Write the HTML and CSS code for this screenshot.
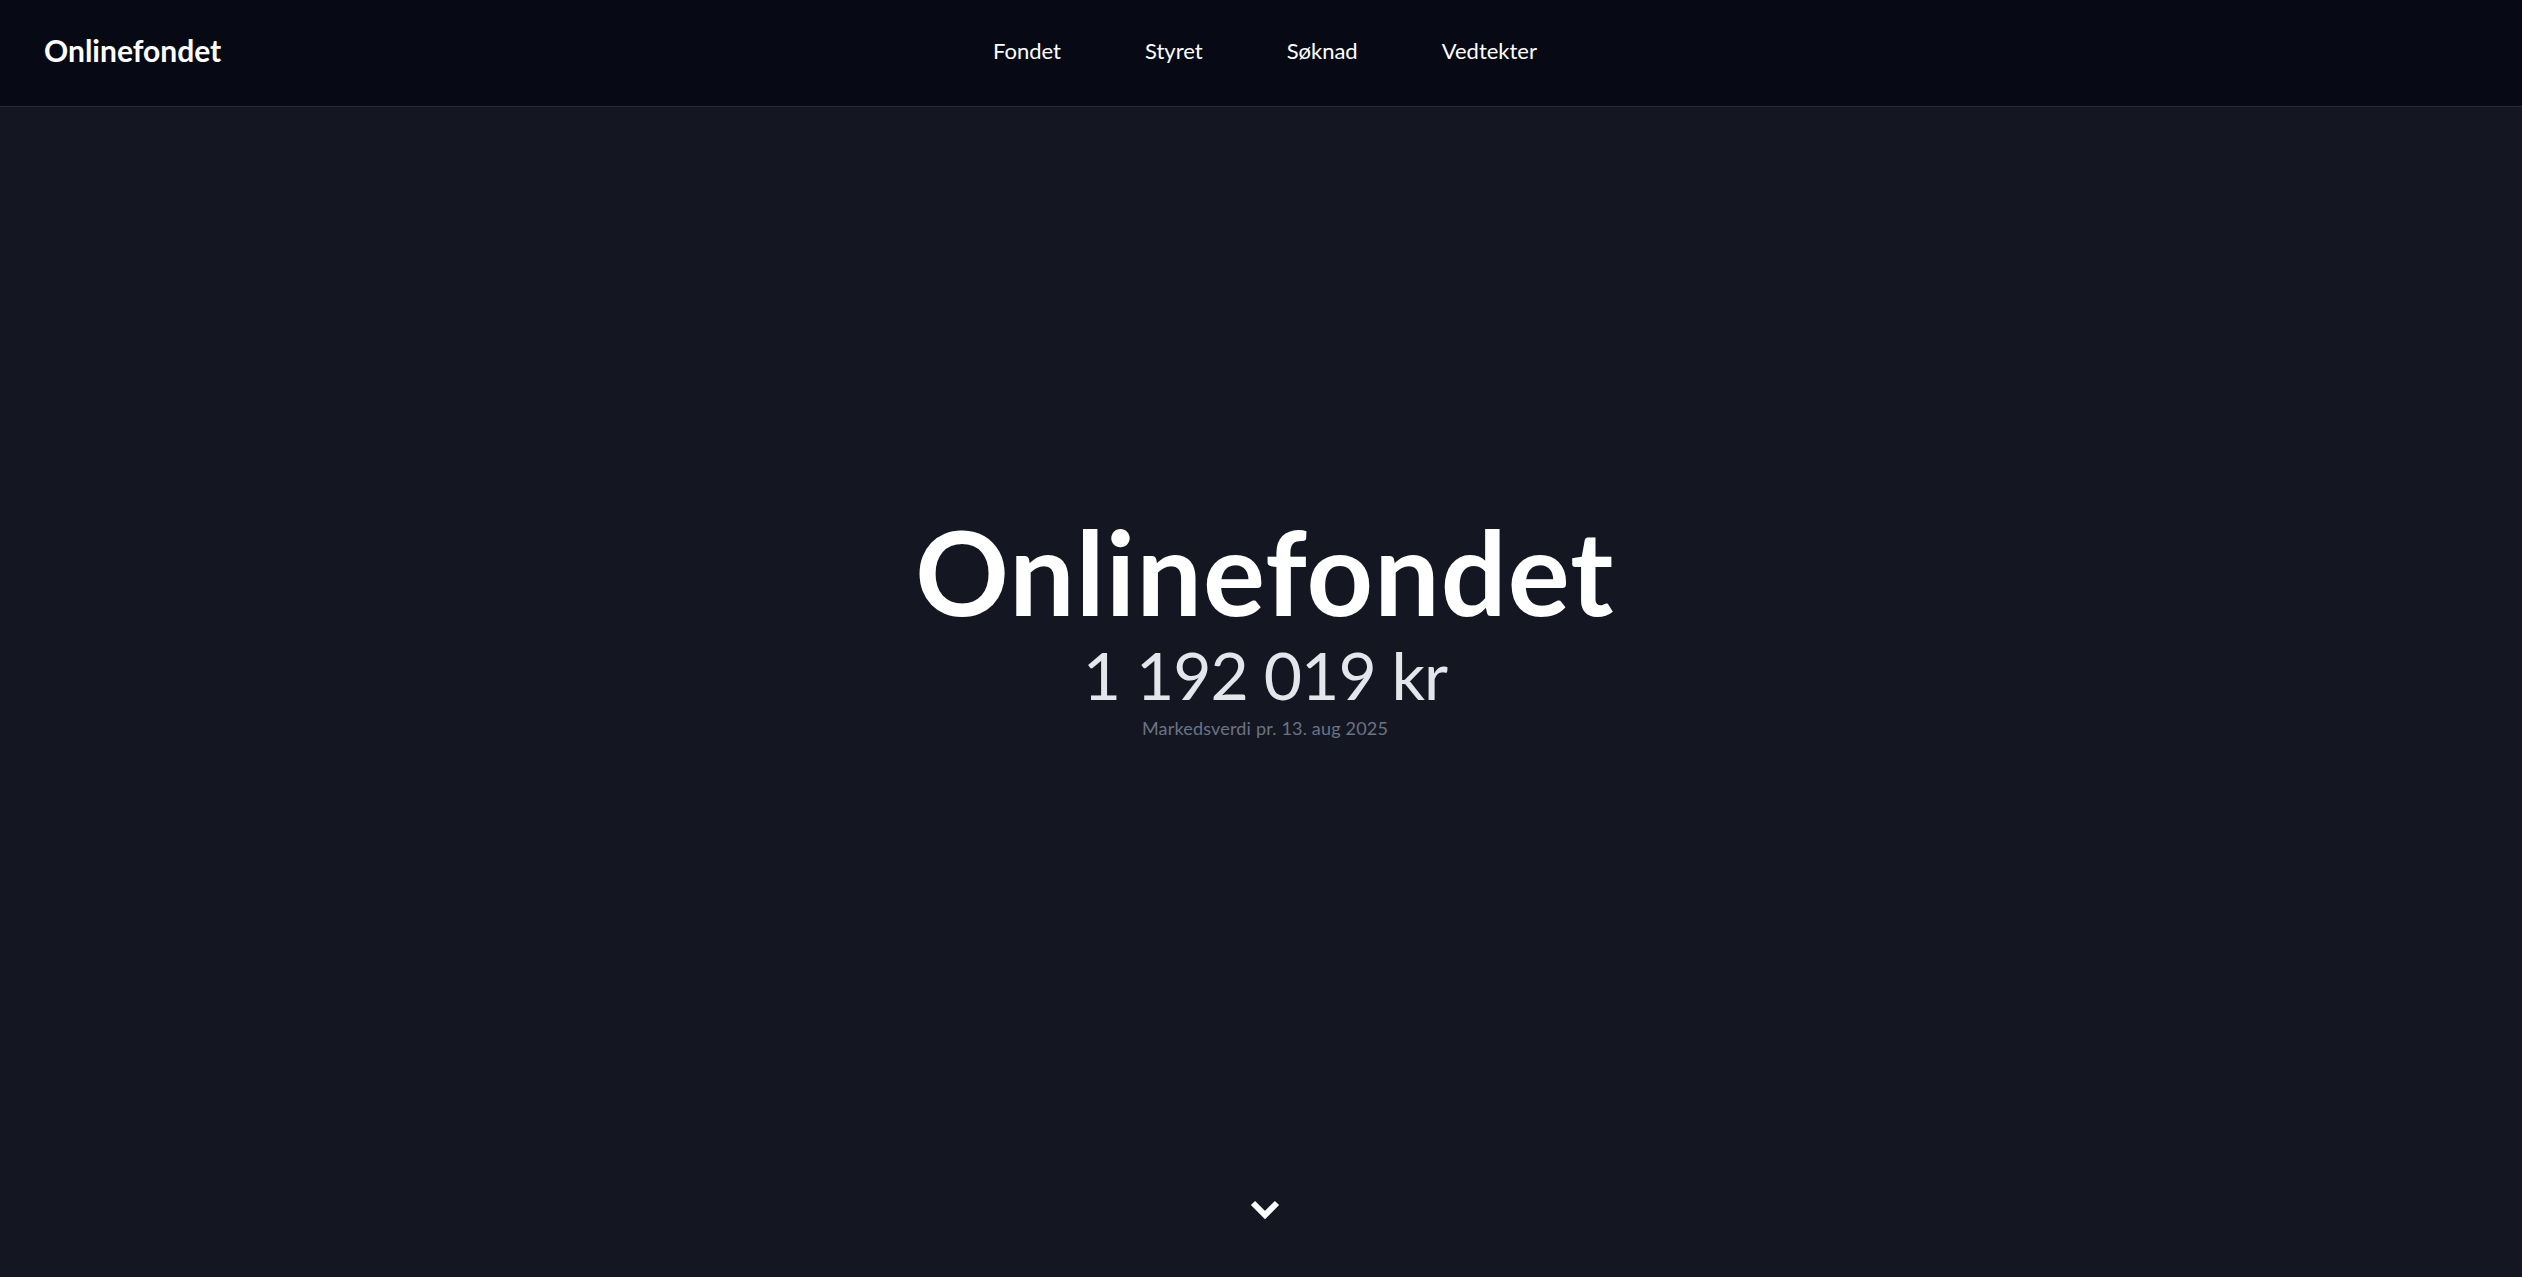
FILE: index.html
```html
<!DOCTYPE html>
<html lang="no">
<head>
<meta charset="utf-8">
<title>Onlinefondet</title>
<link rel="stylesheet" href="styles.css">
</head>
<body>
<header class="site-header">
  <a class="brand" href="#">Onlinefondet</a>
  <nav class="main-nav">
    <a href="#">Fondet</a>
    <a href="#">Styret</a>
    <a href="#">Søknad</a>
    <a href="#">Vedtekter</a>
  </nav>
  <div class="header-spacer"></div>
</header>
<main>
  <section class="hero">
    <div class="hero-content">
      <h1 class="hero-title">Onlinefondet</h1>
      <p class="hero-value">1 192 019 kr</p>
      <p class="hero-note">Markedsverdi pr. 13. aug 2025</p>
    </div>
    <a class="scroll-down" href="#" aria-label="Scroll ned">
      <svg width="30" height="20" viewBox="0 0 30 20" aria-hidden="true">
        <polyline points="3,4 15,16 27,4" fill="none" stroke="#ffffff" stroke-width="6" stroke-linecap="butt" stroke-linejoin="miter"/>
      </svg>
    </a>
  </section>
</main>
</body>
</html>
```
FILE: styles.css
```css
* { box-sizing: border-box; }
html, body { margin: 0; padding: 0; }
body {
  background: #141722;
  color: #ffffff;
  font-family: Lato, "Noto Sans", sans-serif;
}
a { color: inherit; text-decoration: none; }

.site-header {
  position: fixed;
  top: 0; left: 0; right: 0;
  height: 107px;
  background: #070a15;
  border-bottom: 1px solid #242838;
  display: grid;
  grid-template-columns: 1fr auto 1fr;
  align-items: center;
  padding: 0 36px 6px 44px;
  z-index: 10;
}
.brand {
  font-size: 30px;
  font-weight: 700;
  justify-self: start;
}
.main-nav {
  display: flex;
  gap: 84px;
  font-size: 22px;
}

.hero {
  position: relative;
  height: 100vh;
  display: flex;
  align-items: center;
  justify-content: center;
  padding-left: 8px;
}
.hero-content {
  text-align: center;
  margin-bottom: 21px;
}
.hero-title {
  margin: 0;
  font-size: 116px;
  line-height: 1;
  font-weight: 700;
  letter-spacing: 0.01em;
}
.hero-value {
  margin: 12px 0 0;
  font-size: 66px;
  line-height: 1;
  font-weight: 400;
  color: #e4e6eb;
  letter-spacing: -0.015em;
}
.hero-note {
  margin: 7px 0 0;
  font-size: 18px;
  line-height: 1.5;
  color: #6b7385;
  letter-spacing: 0.01em;
}
.scroll-down {
  position: absolute;
  left: calc(50% + 4px);
  bottom: 58px;
  transform: translateX(-50%);
  display: block;
  line-height: 0;
}
```
